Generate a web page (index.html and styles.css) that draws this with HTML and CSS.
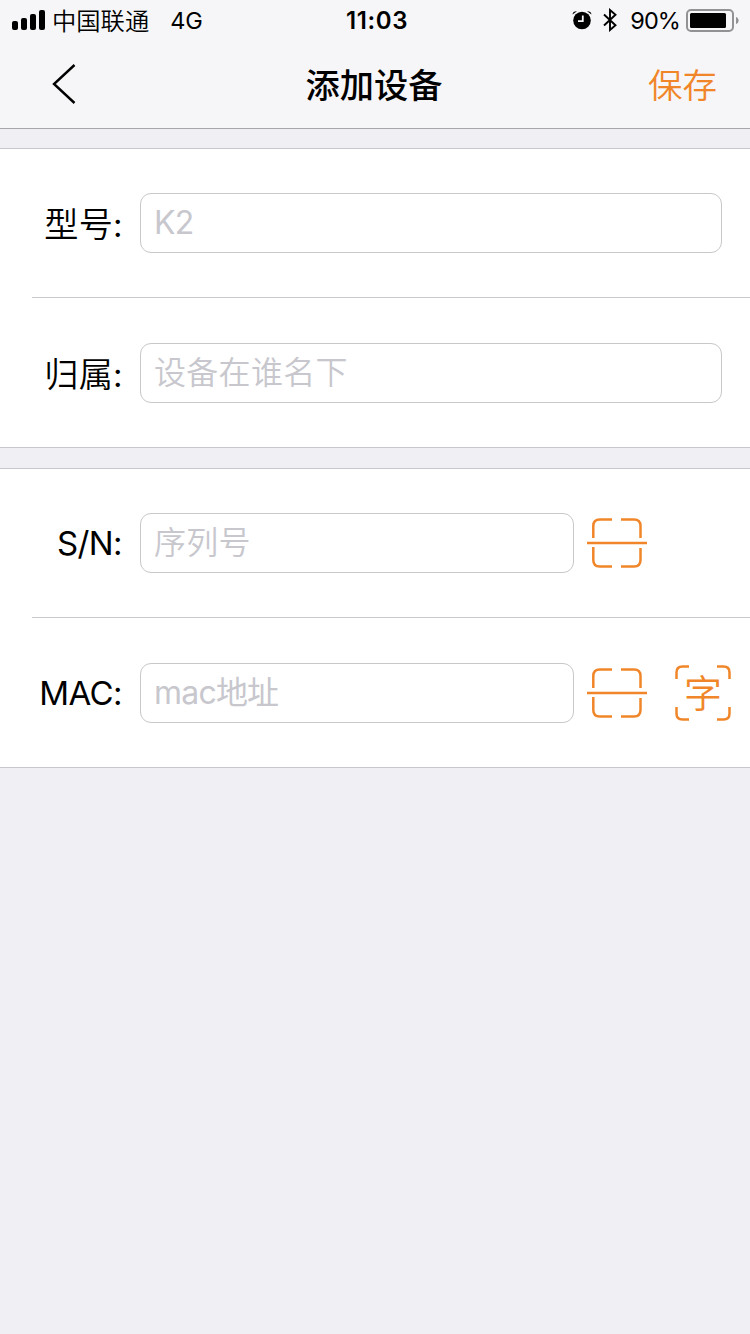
FILE: index.html
```
<!DOCTYPE html>
<html lang="zh-CN">
<head>
<meta charset="utf-8">
<title>添加设备</title>
<link rel="stylesheet" href="styles.css">
</head>
<body>
<header class="header">
  <div class="status">
    <div class="status-left">
      <svg class="signal" width="34" height="21" viewBox="0 0 34 21"><rect x="0" y="11" width="6" height="9" rx="2"/><rect x="9" y="8" width="6" height="12" rx="2"/><rect x="18" y="4" width="6" height="16" rx="2"/><rect x="27" y="0" width="6" height="20" rx="2"/></svg>
      <span class="carrier">中国联通</span>
      <span class="network">4G</span>
    </div>
    <span class="clock">11:03</span>
    <div class="status-right">
      <svg class="alarm" width="20" height="20" viewBox="0 0 20 20"><circle cx="10" cy="10.500" r="8.800"/><path d="M.500 4.500Q1 1 5 1.200zM19.500 4.500Q19 1 15 1.200z"/><path d="M10.800 5.500v5.700H6" fill="none" stroke="#f6f6f8" stroke-width="1.800"/></svg>
      <svg class="bluetooth" width="14" height="24" viewBox="0 0 14 24"><path d="M1 6.500 12.500 17.300 7 22V2l5.500 4.700L1 17.500" fill="none" stroke="#000" stroke-width="1.900"/></svg>
      <span class="percent">90%</span>
      <svg class="battery" width="54" height="24" viewBox="0 0 54 24"><rect x="1" y="2" width="46" height="21" rx="4" fill="none" stroke="#929294" stroke-width="2"/><rect x="4" y="5" width="36" height="15" rx="1.500"/><path d="M50 9c3.500 1 3.500 6 0 7z" fill="#929294"/></svg>
    </div>
  </div>
  <nav class="nav">
    <svg class="back" width="26" height="42" viewBox="0 0 26 42"><path d="M23.500 2 3 21 23.500 40" fill="none" stroke="#000" stroke-width="2.400"/></svg>
    <h1 class="title">添加设备</h1>
    <span class="save">保存</span>
  </nav>
</header>
<main>
  <section class="group">
    <div class="row"><label class="label cjk" for="model">型号<span class="colon">:</span></label><input class="field wide latin" id="model" placeholder="K2"></div>
    <div class="row"><label class="label cjk" for="owner">归属<span class="colon">:</span></label><input class="field wide" id="owner" placeholder="设备在谁名下"></div>
  </section>
  <section class="group">
    <div class="row">
      <label class="label" for="sn">S/N:</label><input class="field" id="sn" placeholder="序列号">
      <svg class="scan" width="60" height="52" viewBox="0 0 60 52"><path d="M6.300 21V9Q6.300 2.500 12.800 2.500H25M34 2.500H47Q53.500 2.500 53.500 9V21M6.300 30V43Q6.300 49.500 12.800 49.500H25M34 49.500H47Q53.500 49.500 53.500 43V31M0 26H60"/></svg>
    </div>
    <div class="row">
      <label class="label" for="mac">MAC:</label><input class="field latin" id="mac" placeholder="mac地址">
      <svg class="scan" width="60" height="52" viewBox="0 0 60 52"><path d="M6.300 21V9Q6.300 2.500 12.800 2.500H25M34 2.500H47Q53.500 2.500 53.500 9V21M6.300 30V43Q6.300 49.500 12.800 49.500H25M34 49.500H47Q53.500 49.500 53.500 43V31M0 26H60"/></svg>
      <div class="ocr">
        <svg class="corners" width="56" height="56" viewBox="0 0 56 56"><path d="M1.500 14V7.500Q1.500 1.500 7.500 1.500H14M42 1.500H48.500Q54.500 1.500 54.500 7.500V14M1.500 42V48.500Q1.500 54.500 7.500 54.500H14M42 54.500H48.500Q54.500 54.500 54.500 48.500V42"/></svg>
        <span class="glyph">字</span>
      </div>
    </div>
  </section>
</main>
</body>
</html>
```
FILE: styles.css
```
* { box-sizing: border-box; }
body {
  margin: 0;
  min-height: 1334px;
  background: #efeff4;
  color: #000;
  font-family: Inter, "Noto Sans CJK SC", sans-serif;
}
svg { display: block; flex: none; }
.header { height: 129px; background: #f6f6f8; border-bottom: 1px solid #a7a7ab; }
.status {
  display: grid;
  grid-template-columns: 1fr auto 1fr;
  align-items: center;
  height: 40px;
  padding: 0 10px 0 12px;
  font-size: 24px;
  line-height: 38px;
  white-space: nowrap;
}
.status span { padding-top: 2px; }
.status-left, .status-right { display: flex; align-items: center; }
.status-right { justify-content: flex-end; }
.carrier { margin-left: 6px; font-size: 24.300px; font-weight: 350; }
.network { margin-left: 21px; font-size: 23.500px; }
.clock { margin: 0 -1px 0 1px; font-weight: 600; font-size: 24px; letter-spacing: .600px; }
.bluetooth { margin-left: 11px; }
.percent { margin: 0 6px 0 13px; font-size: 23.500px; letter-spacing: -.900px; }
.nav {
  display: grid;
  grid-template-columns: 1fr auto 1fr;
  align-items: center;
  height: 88px;
  padding: 0 33px 0 51px;
}
.title { margin: 0 10px 0 -10px; padding-top: 3px; font-size: 34.200px; font-weight: 500; line-height: 48px; }
.save { justify-self: end; padding-top: 3px; color: #f08629; font-size: 34.500px; font-weight: 350; line-height: 48px; }
main { padding-top: 19px; }
.group {
  height: 300px;
  margin-top: 20px;
  background: #fff;
  box-shadow: inset 0 1px #c8c7cc, inset 0 -1px #c8c7cc;
}
.group:first-child { margin-top: 0; }
.row { display: flex; align-items: center; height: 150px; }
.row:first-child {
  background: linear-gradient(#c8c7cc, #c8c7cc) 32px 149px / 100% 1px no-repeat;
}
.label {
  width: 122px;
  margin-right: 18px;
  font-size: 33px;
  letter-spacing: -.600px;
  line-height: 48px;
  text-align: right;
  white-space: nowrap;
}
.cjk { padding-top: 3px; font-size: 34.200px; font-weight: 350; letter-spacing: .200px; }
.colon { font-size: 33px; font-weight: 400; letter-spacing: -.600px; }
.field {
  width: 434px;
  height: 60px;
  padding: 0 13px 2px;
  border: 1px solid #c8c8c8;
  border-radius: 11px;
  background: #fff;
  font: 350 32px/44px Inter, "Noto Sans CJK SC", sans-serif;
  letter-spacing: .300px;
  outline: none;
}
.field::placeholder { color: #c7c7cd; opacity: 1; }
.latin { font-weight: 400; letter-spacing: -.800px; }
.wide { width: 582px; }
.scan, .corners { fill: none; stroke: #f08629; stroke-width: 2.500; }
.scan { margin-left: 13px; }
.ocr { display: grid; place-items: center; width: 56px; height: 56px; margin-left: 28px; }
.corners, .glyph { grid-area: 1 / 1; }
.glyph { padding-bottom: 4px; color: #f08629; font: 350 38px/52px "Noto Sans CJK SC", sans-serif; }
```
